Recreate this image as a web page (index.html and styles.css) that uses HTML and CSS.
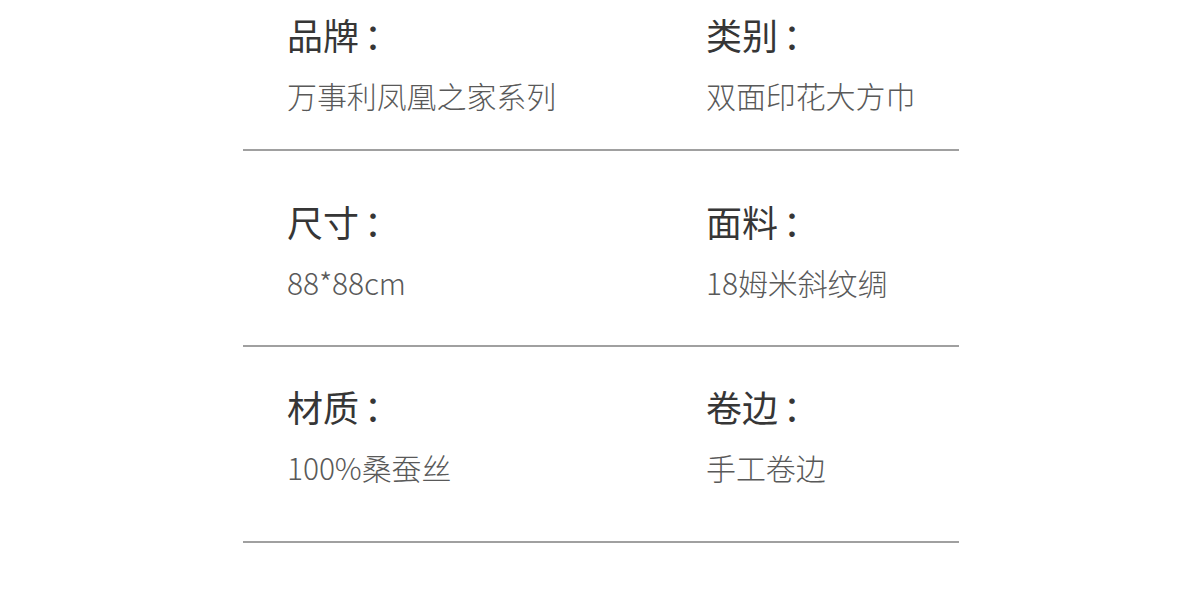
FILE: index.html
```html
<!DOCTYPE html>
<html lang="zh-CN">
<head>
<meta charset="utf-8">
<link rel="stylesheet" href="styles.css">
</head>
<body>
<div class="spec">
  <div class="row row-1">
    <div class="cell"><div class="label">品牌<span class="colon">：</span></div><div class="value">万事利凤凰之家系列</div></div>
    <div class="cell"><div class="label">类别<span class="colon">：</span></div><div class="value">双面印花大方巾</div></div>
  </div>
  <div class="row row-2">
    <div class="cell"><div class="label">尺寸<span class="colon">：</span></div><div class="value">88*88cm</div></div>
    <div class="cell"><div class="label">面料<span class="colon">：</span></div><div class="value">18姆米斜纹绸</div></div>
  </div>
  <div class="row row-3">
    <div class="cell"><div class="label">材质<span class="colon">：</span></div><div class="value">100%桑蚕丝</div></div>
    <div class="cell"><div class="label">卷边<span class="colon">：</span></div><div class="value">手工卷边</div></div>
  </div>
</div>
</body>
</html>
```

FILE: styles.css
```css
html, body {
  margin: 0;
  padding: 0;
  background: #ffffff;
}
body {
  font-family: "Noto Sans CJK SC", "Noto Sans", sans-serif;
}
.spec {
  width: 716px;
  margin-left: 243px;
  display: flex;
  flex-direction: column;
}
.row {
  display: grid;
  grid-template-columns: 419px 1fr;
  padding-left: 44px;
  border-bottom: 2px solid #a0a0a0;
  box-sizing: border-box;
}
.row-1 { height: 151px; padding-top: 16px; }
.row-2 { height: 196px; padding-top: 52px; }
.row-3 { height: 196px; padding-top: 41px; }
.cell {
  display: flex;
  flex-direction: column;
}
.label {
  font-size: 36px;
  line-height: 36px;
  color: #363636;
  font-weight: 400;
}
.colon {
  margin-left: 5px;
}
.value {
  margin-top: 28px;
  font-size: 30px;
  line-height: 30px;
  color: #595959;
  font-weight: 300;
  letter-spacing: -0.1px;
}
```
